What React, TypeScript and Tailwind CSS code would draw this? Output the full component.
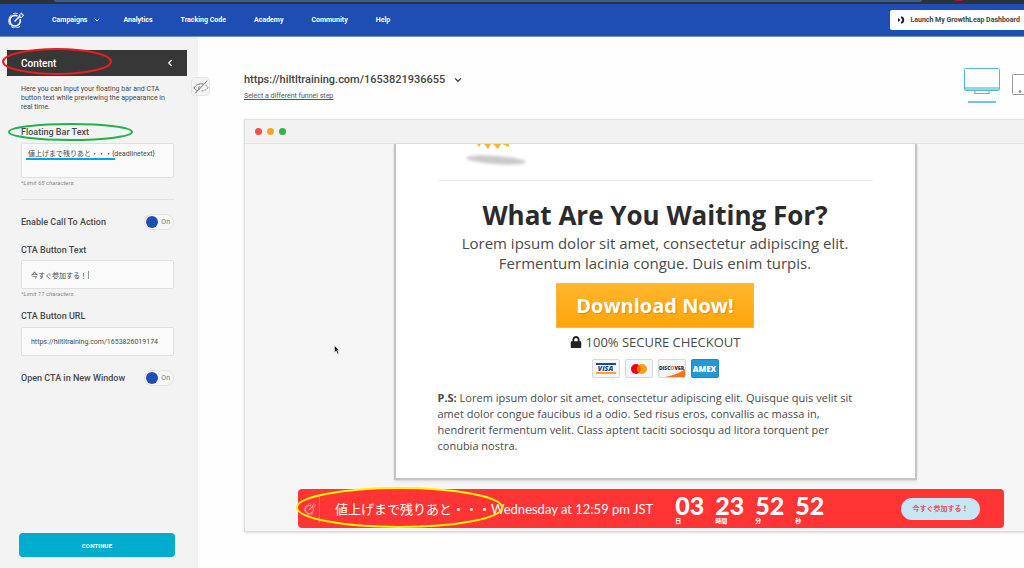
import React, { useState } from "react";
import { ChevronDown, ChevronLeft } from "lucide-react";
import { FaLock } from "react-icons/fa";

const navItems = ["Analytics", "Tracking Code", "Academy", "Community", "Help"];

const countdown = [
    { value: "03", unit: "日" },
    { value: "23", unit: "時間" },
    { value: "52", unit: "分" },
    { value: "52", unit: "秒" },
];

function TargetLogo({ className }: { className: string }) {
    return (
        <svg className={className} viewBox="0 0 24 24" fill="none" stroke="currentColor" strokeLinecap="round" strokeLinejoin="round">
            <path d="M13.500 5.600A8 8 0 1 0 18.500 11.500" strokeWidth="2.400" />
            <path d="M5 4.500A12 12 0 0 0 2.500 19M5 22.200a11 11 0 0 0 13-.6M8 2.200a10 10 0 0 1 6 0" strokeWidth="1.300" />
            <path d="M10.500 13.500 18 6" strokeWidth="2.200" />
            <path d="M17 8V4.600L20.400 1.400l.5 2.700 2.700.5-3.200 3.400Z" strokeWidth="1.500" />
        </svg>
    );
}

function Ellipse({ className, color }: { className: string; color: string }) {
    return (
        <svg className={"pointer-events-none absolute overflow-visible " + className} viewBox="0 0 100 100" preserveAspectRatio="none" fill="none">
            <ellipse cx="50" cy="50" rx="50" ry="50" stroke={color} strokeWidth="2" vectorEffect="non-scaling-stroke" />
        </svg>
    );
}

function Toggle({ id, label }: { id: string; label: string }) {
    const [on, setOn] = useState(true);

    return (
        <div className="flex h-4 items-center justify-between">
            <label htmlFor={id} className="text-[9px] leading-3 font-medium">{label}</label>
            <div className="relative flex items-center">
                <input
                    id={id}
                    type="checkbox"
                    checked={on}
                    onChange={(e) => setOn(e.target.checked)}
                    className="peer h-4 w-[30px] cursor-pointer appearance-none rounded-full border border-[#e4e4e4] bg-[#f6f6f6]"
                />
                <span className="pointer-events-none absolute left-0.5 size-3 rounded-full bg-gray-400 peer-checked:bg-[#1e4db3]" />
                <span className="pointer-events-none absolute right-1 text-[7px] leading-3 text-[#777]">{on ? "On" : "Off"}</span>
            </div>
        </div>
    );
}

function Header() {
    return (
        <header className="shrink-0">
            <div className="flex h-1 items-start justify-between bg-[#2f3138]">
                <div className="ml-[54px] h-0.5 w-[868px] shrink-0 rounded-b bg-[#3d5a8c]" />
                <div className="mr-[61px] h-px w-2 rounded-b bg-[#a5133a]" />
            </div>
            <div className="flex h-[33px] items-center border-b border-[#6d8fd6] bg-[#1e4db3] pl-2 text-white">
                <a href="#" aria-label="Home"><TargetLogo className="size-4" /></a>
                <nav className="ml-7 flex flex-1 items-center gap-7 text-[7px] leading-3 font-bold whitespace-nowrap">
                    <button className="-mr-1.5 flex items-center gap-1.5">
                        Campaigns
                        <ChevronDown className="size-2" strokeWidth={3} />
                    </button>
                    {navItems.map((item) => (
                        <a key={item} href="#">{item}</a>
                    ))}
                </nav>
                <button className="flex h-5 items-center gap-1 rounded-l-xs bg-white pr-1 pl-2 text-[7px] leading-3 font-bold whitespace-nowrap text-[#444]">
                    <svg className="size-2" viewBox="0 0 16 16" fill="none" stroke="#222">
                        <path d="M0 4l5 4-5 4Z" fill="#222" stroke="none" />
                        <path d="M6 2.2A6 6 0 0 1 6 13.8" strokeWidth="4" />
                    </svg>
                    Launch My GrowthLeap Dashboard
                </button>
            </div>
        </header>
    );
}

function Sidebar() {
    const [barText, setBarText] = useState("値上げまで残りあと・・・{deadlinetext}");
    const [ctaText, setCtaText] = useState("今すぐ参加する！");
    const [ctaUrl, setCtaUrl] = useState("https://hiltltraining.com/1653826019174");

    return (
        <aside className="relative flex w-[198px] shrink-0 flex-col bg-[#f3f3f3] pt-[13px] pb-[11px] text-[#4a4a4a]">
            <div className="relative mr-[11px] ml-[7px]">
                <button className="flex h-[26px] w-full items-center justify-between bg-[#373737] pr-3 pl-3.5 text-[10px] font-medium text-white">
                    Content
                    <ChevronLeft className="size-2.5" strokeWidth={3} />
                </button>
                <Ellipse className="top-[-1px] left-[-4px] h-[25px] w-[108px]" color="#ec1c24" />
            </div>
            <button aria-label="Hide panel" className="absolute top-10 left-[191px] flex size-[19px] items-center justify-center rounded-sm border border-[#e6e6e6] bg-[#f3f3f3]">
                <svg className="h-3.5 w-4" viewBox="0 0 16 14" fill="none" stroke="#777" strokeLinecap="round">
                    <path d="M1 8C3 4.500 6 3.500 10 3.800M1 8c1 1.500 2 2.200 3.500 2.700" />
                    <path d="M6.500 6.500a2.200 2.200 0 0 0-.5 3" />
                    <path d="M9 11c3-.5 5-1.500 6-3.500-.5-1-1-1.500-2-2" strokeDasharray="1 2" />
                    <path d="M2.500 13 14 1" />
                </svg>
            </button>

            <div className="flex flex-1 flex-col pr-6 pl-[21px]">
                <p className="mt-[9px] text-[7px] leading-[9px]">
                    Here you can input your floating bar and CTA<br />
                    button text while previewing the appearance in<br />
                    real time.
                </p>

                <div className="relative mt-3.5 flex">
                    <label htmlFor="bar-text" className="text-[9px] leading-3 font-medium">Floating Bar Text</label>
                    <Ellipse className="top-[-2px] left-[-12px] h-4 w-[123px]" color="#22b14c" />
                </div>
                <div className="relative mt-[5px] flex">
                    <textarea
                        id="bar-text"
                        value={barText}
                        onChange={(e) => setBarText(e.target.value)}
                        className="h-[35px] w-full resize-none overflow-hidden rounded-xs border border-[#e0e0e0] bg-[#fafafa] px-1.5 py-1 text-[7px] leading-3 outline-none"
                    />
                    <span className="pointer-events-none absolute top-[15px] left-[5px] h-0.5 w-[89px] bg-[#00a2e8]" />
                </div>
                <p className="mt-px text-[6px] leading-2 text-[#888] italic">*Limit 65 characters.</p>
                <hr className="mt-3 mb-3.5 border-[#e0e0e0]" />

                <Toggle id="enable-cta" label="Enable Call To Action" />

                <label htmlFor="cta-text" className="mt-3.5 text-[9px] leading-3 font-medium">CTA Button Text</label>
                <div className="relative mt-1 flex items-center">
                    <input
                        id="cta-text"
                        type="text"
                        value={ctaText}
                        onChange={(e) => setCtaText(e.target.value)}
                        className="h-[29px] w-full rounded-xs border border-[#e0e0e0] bg-[#fafafa] px-[9px] text-[7px] outline-none"
                    />
                    <span className="pointer-events-none absolute left-[67px] h-2 w-px bg-[#999]" />
                </div>
                <p className="mt-px text-[6px] leading-2 text-[#888] italic">*Limit 11 characters.</p>

                <label htmlFor="cta-url" className="mt-3 text-[9px] leading-3 font-medium">CTA Button URL</label>
                <input
                    id="cta-url"
                    type="text"
                    value={ctaUrl}
                    onChange={(e) => setCtaUrl(e.target.value)}
                    className="mt-[5px] mb-3.5 h-[29px] w-full rounded-xs border border-[#e0e0e0] bg-[#fafafa] px-[9px] text-[7px] outline-none"
                />

                <Toggle id="new-window" label="Open CTA in New Window" />

                <button className="mt-auto -mr-px -ml-0.5 h-6 rounded-sm bg-[#00adcf] text-[6px] font-bold tracking-wide text-white">CONTINUE</button>
            </div>
        </aside>
    );
}

function PaymentCards() {
    return (
        <div className="mt-[7px] flex justify-center gap-[5px] font-['Open_Sans',sans-serif] text-[7px] leading-none font-extrabold">
            <div className="flex h-[19px] w-7 flex-col items-center justify-between rounded-xs border border-[#d5d8de] bg-[#f6f6f8] px-[3px] py-[3px] text-[#1a4a94] italic">
                <span className="h-0.5 w-full bg-[#1a4a94]" />
                VISA
                <span className="h-0.5 w-full bg-[#f5a623]" />
            </div>
            <div className="flex h-[19px] w-7 items-center justify-center rounded-xs border border-[#d5d8de] bg-[#f6f6f8]">
                <svg className="h-2.5 w-4" viewBox="0 0 16 10">
                    <circle cx="5" cy="5" r="5" fill="#eb001b" />
                    <circle cx="11" cy="5" r="5" fill="#f79e1b" />
                    <path d="M8 1a5 5 0 0 1 0 8 5 5 0 0 1 0-8Z" fill="#ff5f00" />
                </svg>
            </div>
            <div className="relative flex h-[19px] w-7 items-center justify-center overflow-hidden rounded-xs border border-[#d5d8de] bg-[#f6f6f8] text-[5px] text-[#333]">
                <svg className="absolute right-0 bottom-0 h-2 w-5" viewBox="0 0 20 8">
                    <path d="M0 8Q12 6 20 0V8Z" fill="#f47421" />
                </svg>
                <span className="relative">DISC<span className="text-[#f47421]">O</span>VER</span>
            </div>
            <div className="flex h-[19px] w-7 items-center justify-center rounded-xs border border-[#1b86c4] bg-[#2497d6] text-[8px] text-white">AMEX</div>
        </div>
    );
}

function FunnelPage() {
    return (
        <div className="mx-auto w-[523px] border-2 border-t-0 border-[#c4c4c4] bg-white px-[42px] pb-6 font-['Open_Sans',sans-serif] text-[#4a4a4a] shadow-sm">
            <svg className="ml-[22px] block h-[26px] w-[72px]" viewBox="0 0 72 26">
                <defs>
                    <filter id="soft" x="-20%" y="-60%" width="140%" height="220%">
                        <feGaussianBlur stdDeviation="1.6" />
                    </filter>
                </defs>
                <path d="M17 0h4l-2 3ZM24 0h7l-3 5ZM33 0h8l-3 5ZM42 0h7v3Z" fill="#f3b63c" />
                <ellipse cx="36" cy="16" rx="30" ry="4" fill="#c9c9c9" filter="url(#soft)" transform="rotate(4 36 16)" />
            </svg>
            <hr className="mt-2.5 border-[#e8e8e8]" />
            <div className="text-center">
                <h1 className="mt-4 text-[26px] leading-9 font-bold text-[#2b2b2b]">What Are You Waiting For?</h1>
                <p className="text-[15px] leading-5">
                    Lorem ipsum dolor sit amet, consectetur adipiscing elit.<br />
                    Fermentum lacinia congue. Duis enim turpis.
                </p>
                <button className="mt-2.5 h-[45px] w-[198px] border border-[#fbb540] bg-linear-to-b from-[#ffb62b] to-[#ffa508] text-[20px] font-bold text-white [text-shadow:1px_1px_1px_#b8770088]">Download Now!</button>
                <p className="mt-1 flex items-center justify-center gap-1 text-[13px] leading-5">
                    <FaLock className="size-3 text-[#222]" />
                    100% SECURE CHECKOUT
                </p>
                <PaymentCards />
            </div>
            <p className="mt-3 text-[11px] leading-4">
                <strong>P.S:</strong> Lorem ipsum dolor sit amet, consectetur adipiscing elit. Quisque quis velit sit<br />
                amet dolor congue faucibus id a odio. Sed risus eros, convallis ac massa in,<br />
                hendrerit fermentum velit. Class aptent taciti sociosqu ad litora torquent per<br />
                conubia nostra.
            </p>
        </div>
    );
}

function FloatingBar() {
    return (
        <div className="relative mt-[9px] mr-[61px] mb-[3px] ml-[53px] flex h-[39px] items-center rounded-sm bg-[#ff3434] pr-6 font-['Lato','Noto_Sans_CJK_JP',sans-serif] text-white">
            <div className="flex h-7 w-[22px] items-center border-r border-[#ff6464] pl-1.5 text-[#ff9a9a]">
                <TargetLogo className="size-3" />
            </div>
            <p className="ml-[15px] text-[13px] leading-5 whitespace-nowrap">値上げまで残りあと・・・Wednesday at 12:59 pm JST</p>
            <div className="ml-[22px] flex gap-2.5">
                {countdown.map((part, i) => (
                    <div key={i} className="flex w-[30px] flex-col">
                        <span className="text-[25px] leading-6 font-black">{part.value}</span>
                        <span className="text-[6px] leading-2 font-bold">{part.unit}</span>
                    </div>
                ))}
            </div>
            <button className="ml-auto h-[22px] w-[79px] rounded-full bg-[#c5e6f2] text-[7px] font-bold text-[#e8505b]">今すぐ参加する！</button>
            <Ellipse className="top-[-1px] left-[-1px] h-[39px] w-[205px]" color="#fff200" />
        </div>
    );
}

function Preview() {
    return (
        <main className="min-w-0 flex-1 overflow-hidden bg-[#fefefe] pl-[46px]">
            <div className="-mr-[42px]">
                <div className="flex h-[82px] items-start justify-between pt-[31px] pr-[42px]">
                    <div>
                        <button className="flex items-center gap-2 text-[11px] leading-6 font-medium text-[#444]">
                            https://hiltltraining.com/1653821936655
                            <ChevronDown className="size-2.5" strokeWidth={3} />
                        </button>
                        <a href="#" className="block text-[7px] leading-2 text-[#555] underline">Select a different funnel step</a>
                    </div>
                    <div className="-mr-4 flex items-start gap-3">
                        <button aria-label="Desktop" className="flex flex-col items-center gap-1.5">
                            <svg className="h-[27px] w-9" viewBox="0 0 36 27" fill="none" stroke="#4fbccd">
                                <rect x=".5" y=".5" width="35" height="22" rx="1" />
                                <path d="M1 20.500h34" strokeWidth="3" stroke="#8fd8e4" />
                                <path d="M11 23v2.500h-1h16h-1V23" />
                            </svg>
                            <span className="h-0.5 w-7 bg-[#6cc8d6]" />
                        </button>
                        <button aria-label="Tablet" className="pt-1.5">
                            <svg className="h-[21px] w-7" viewBox="0 0 28 21" fill="none" stroke="#999">
                                <rect x=".5" y=".5" width="27" height="20" rx="1" />
                                <circle cx="8" cy="17.500" r="1" fill="#999" />
                            </svg>
                        </button>
                    </div>
                </div>

                <section className="relative border border-[#dedede] bg-[#f5f5f5] shadow-sm">
                    <div className="flex h-6 items-center gap-[5px] border-b border-[#e2e2e2] bg-[#f2f2f2] pl-2.5">
                        <span className="size-[7px] rounded-full bg-[#f2504b]" />
                        <span className="size-[7px] rounded-full bg-[#f5a623]" />
                        <span className="size-[7px] rounded-full bg-[#2fb344]" />
                    </div>
                    <FunnelPage />
                    <FloatingBar />
                    <svg className="pointer-events-none absolute top-[225px] left-[89px] h-2.5 w-1.5" viewBox="0 0 12 20">
                        <path d="M1 1v14l3.500-3 2.500 6 2.500-1-2.500-6H11Z" fill="#111" stroke="#fff" strokeWidth="1" />
                    </svg>
                </section>
            </div>
        </main>
    );
}

export default function App() {
    return (
        <div className="flex min-h-screen flex-col overflow-hidden font-['Roboto','Noto_Sans_CJK_JP',sans-serif]">
            <Header />
            <div className="flex flex-1">
                <Sidebar />
                <Preview />
            </div>
        </div>
    );
}
